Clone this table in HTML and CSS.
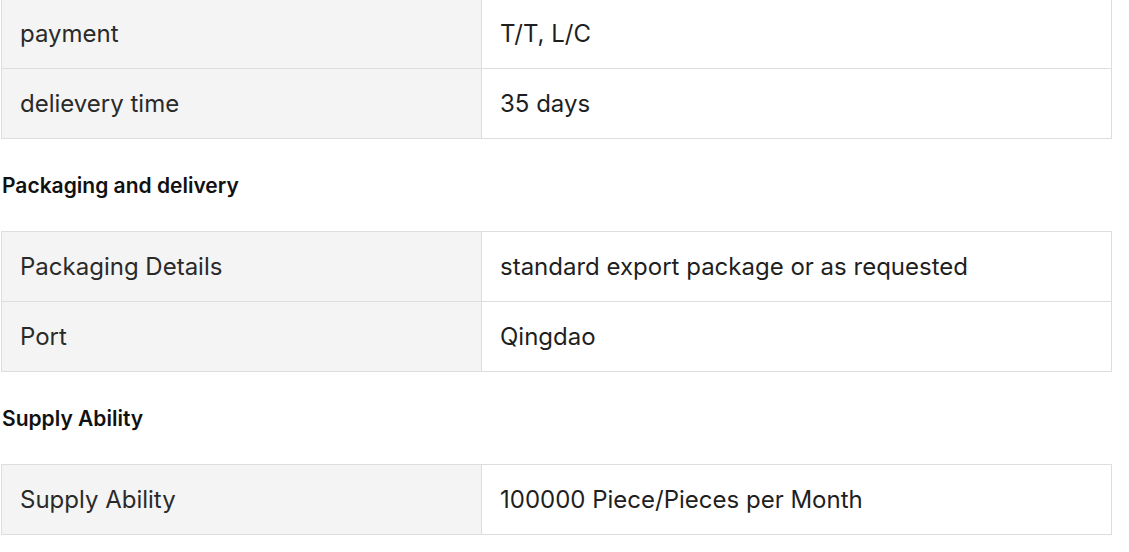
FILE: index.html
```html
<!DOCTYPE html>
<html>
<head>
<meta charset="utf-8">
<link rel="stylesheet" href="styles.css">
</head>
<body>
<div class="page">
  <table class="spec first">
    <tr><td class="label">payment</td><td class="value">T/T, L/C</td></tr>
    <tr><td class="label">delievery time</td><td class="value">35 days</td></tr>
  </table>
  <h3 class="heading">Packaging and delivery</h3>
  <table class="spec">
    <tr><td class="label">Packaging Details</td><td class="value">standard export package or as requested</td></tr>
    <tr><td class="label">Port</td><td class="value">Qingdao</td></tr>
  </table>
  <h3 class="heading">Supply Ability</h3>
  <table class="spec">
    <tr><td class="label">Supply Ability</td><td class="value">100000 Piece/Pieces per Month</td></tr>
  </table>
</div>
</body>
</html>
```
FILE: styles.css
```css
html, body {
  margin: 0;
  padding: 0;
  background: #ffffff;
}
body {
  font-family: Inter, "Liberation Sans", sans-serif;
  color: #222222;
}
.page {
  padding-left: 1px;
  width: 1111px;
  margin-top: -2px;
}
.spec {
  width: 1111px;
  border-collapse: collapse;
  table-layout: fixed;
}
.spec td {
  border: 1px solid #dddddd;
  height: 70px;
  padding: 0 18px;
  font-size: 24px;
  line-height: 28px;
  vertical-align: middle;
  box-sizing: border-box;
}
.spec .label {
  width: 480px;
  background: #f4f4f4;
  color: #2a2a2a;
}
.spec .value {
  background: #ffffff;
  color: #1f1f1f;
}
.heading {
  margin: 0;
  padding: 34px 0 32px 1px;
  font-size: 21px;
  line-height: 26px;
  font-weight: 600;
  color: #111111;
}
```
